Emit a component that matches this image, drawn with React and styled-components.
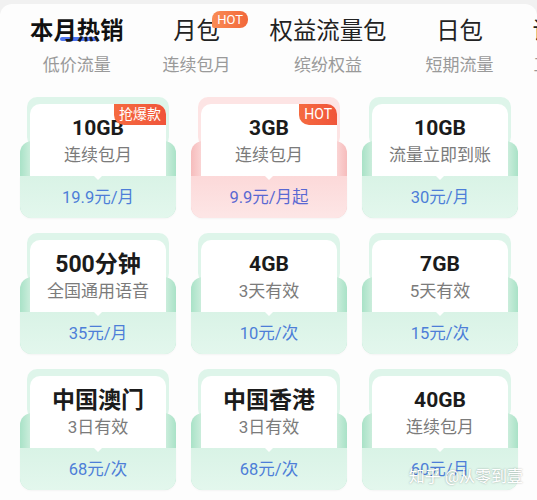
import React from 'react';
import styled, { createGlobalStyle } from 'styled-components';

const GlobalStyle = createGlobalStyle`
  html, body {
    margin: 0;
    padding: 0;
    background: #f1f1f1;
    font-family: "Roboto", "Noto Sans CJK SC", sans-serif;
  }
`;

const themes = {
  green: {
    back: '#def5ea',
    flapEdge: '#a9e2c7',
    flapMid: '#cdeedd',
    front: 'linear-gradient(180deg, #d9f3e6 0%, #e3f7ed 100%)',
    price: '#4d7ed8',
  },
  pink: {
    back: '#fde4e4',
    flapEdge: '#f6bcbc',
    flapMid: '#fbd6d6',
    front: 'linear-gradient(180deg, #fcd9d9 0%, #fde6e6 100%)',
    price: '#5a68d2',
  },
};

const tabs = [
  { title: '本月热销', sub: '低价流量', active: true },
  { title: '月包', sub: '连续包月', hot: true },
  { title: '权益流量包', sub: '缤纷权益' },
  { title: '日包', sub: '短期流量' },
  { title: '语音包', sub: '工作必备' },
];

const plans = [
  { title: '10GB', sub: '连续包月', price: '19.9元/月', badge: '抢爆款' },
  { title: '3GB', sub: '连续包月', price: '9.9元/月起', badge: 'HOT', tone: 'pink' },
  { title: '10GB', sub: '流量立即到账', price: '30元/月' },
  { title: '500分钟', sub: '全国通用语音', price: '35元/月', big: true },
  { title: '4GB', sub: '3天有效', price: '10元/次' },
  { title: '7GB', sub: '5天有效', price: '15元/次' },
  { title: '中国澳门', sub: '3日有效', price: '68元/次', big: true },
  { title: '中国香港', sub: '3日有效', price: '68元/次', big: true },
  { title: '40GB', sub: '连续包月', price: '60元/月' },
];

const Page = styled.div`
  position: relative;
  width: 537px;
  height: 500px;
  overflow: hidden;
  padding-top: 4px;
  box-sizing: border-box;
`;

const Panel = styled.div`
  background: #fdfdfd;
  border-radius: 12px 12px 0 0;
  height: 100%;
`;

const TabBar = styled.div`
  display: flex;
  gap: 39px;
  padding: 10px 0 0 30px;
  height: 93px;
  box-sizing: border-box;
  white-space: nowrap;
  overflow: hidden;
`;

const Tab = styled.div`
  display: flex;
  flex-direction: column;
  align-items: center;
  flex-shrink: 0;
`;

const TabTitle = styled.div`
  position: relative;
  font-size: 23.4px;
  line-height: 34px;
  font-weight: ${(p) => (p.$active ? 700 : 400)};
  color: ${(p) => (p.$active ? '#111' : '#222')};
  z-index: 0;
`;

const Underline = styled.span`
  position: absolute;
  left: 30px;
  top: 23px;
  width: 37px;
  height: 4px;
  border-radius: 2px;
  background: #4f74ee;
  z-index: -1;
`;

const HotTag = styled.span`
  position: absolute;
  left: 39px;
  top: -3px;
  padding: 0 5px;
  height: 17px;
  line-height: 17px;
  font-size: 13px;
  font-weight: 400;
  color: #fff;
  background: linear-gradient(90deg, #f98b55, #f2683a);
  border-radius: 8px 8px 8px 2px;
`;

const TabSub = styled.div`
  font-size: 17px;
  line-height: 24px;
  margin-top: 5px;
  color: #9a9a9a;
`;

const Grid = styled.div`
  display: grid;
  grid-template-columns: repeat(3, 156px);
  column-gap: 15px;
  row-gap: 15px;
  padding: 0 0 0 20px;
`;

const Card = styled.div`
  position: relative;
  display: flex;
  flex-direction: column;
  height: 121px;
  isolation: isolate;

  &::before {
    content: '';
    position: absolute;
    top: 0;
    left: 7px;
    right: 7px;
    height: 50px;
    border-radius: 10px;
    background: ${(p) => p.$t.back};
    z-index: -2;
  }

  &::after {
    content: '';
    position: absolute;
    top: 44px;
    left: 0;
    right: 0;
    bottom: 0;
    border-radius: 12px;
    background: linear-gradient(
      90deg,
      ${(p) => p.$t.flapEdge} 0%,
      ${(p) => p.$t.flapMid} 7%,
      ${(p) => p.$t.flapMid} 93%,
      ${(p) => p.$t.flapEdge} 100%
    );
    z-index: -1;
  }
`;

const Sheet = styled.div`
  position: relative;
  margin: 7px 10px 0;
  height: 72px;
  background: #fff;
  border-radius: 10px 10px 0 0;
  display: flex;
  flex-direction: column;
  align-items: center;
  padding-top: 11px;
  box-sizing: border-box;
`;

const Badge = styled.span`
  position: absolute;
  top: 0;
  right: 0;
  height: 21px;
  line-height: 21px;
  padding: 0 5px;
  font-size: 14px;
  color: #fff;
  background: linear-gradient(90deg, #f56a40, #f0553a);
  border-radius: 0 10px 0 10px;
`;

const Title = styled.div`
  font-size: ${(p) => (p.$big ? '23px' : '21px')};
  line-height: 27px;
  font-weight: 700;
  color: #1b1b1b;
`;

const Sub = styled.div`
  font-size: 17px;
  line-height: 24px;
  color: #7b7b7b;
  margin-top: 1px;
`;

const Front = styled.div`
  position: relative;
  height: 42px;
  border-radius: 0 0 12px 12px;
  background: ${(p) => p.$t.front};
  display: flex;
  align-items: center;
  justify-content: center;
  box-shadow: 0 1px 2px rgba(0, 0, 0, 0.04);

  &::before {
    content: '';
    position: absolute;
    top: 0;
    left: 50%;
    margin-left: -4px;
    border-left: 4px solid transparent;
    border-right: 4px solid transparent;
    border-top: 4px solid #fff;
  }
`;

const Price = styled.div`
  font-size: 16.5px;
  color: ${(p) => p.$color};
  padding-bottom: 2px;
`;

const Watermark = styled.div`
  position: absolute;
  right: 14px;
  bottom: 13px;
  font-size: 16px;
  color: #fff;
  text-shadow: 0 0 2px rgba(0, 0, 0, 0.35);
`;

export default function App() {
  return (
    <>
      <GlobalStyle />
      <Page>
        <Panel>
          <TabBar>
            {tabs.map((t) => (
              <Tab key={t.title}>
                <TabTitle $active={t.active}>
                  {t.title}
                  {t.active && <Underline />}
                  {t.hot && <HotTag>HOT</HotTag>}
                </TabTitle>
                <TabSub>{t.sub}</TabSub>
              </Tab>
            ))}
          </TabBar>
          <Grid>
            {plans.map((p, i) => {
              const t = themes[p.tone || 'green'];
              return (
                <Card key={i} $t={t}>
                  <Sheet>
                    {p.badge && <Badge>{p.badge}</Badge>}
                    <Title $big={p.big}>{p.title}</Title>
                    <Sub>{p.sub}</Sub>
                  </Sheet>
                  <Front $t={t}>
                    <Price $color={t.price}>{p.price}</Price>
                  </Front>
                </Card>
              );
            })}
          </Grid>
        </Panel>
        <Watermark>知乎 @从零到壹</Watermark>
      </Page>
    </>
  );
}
